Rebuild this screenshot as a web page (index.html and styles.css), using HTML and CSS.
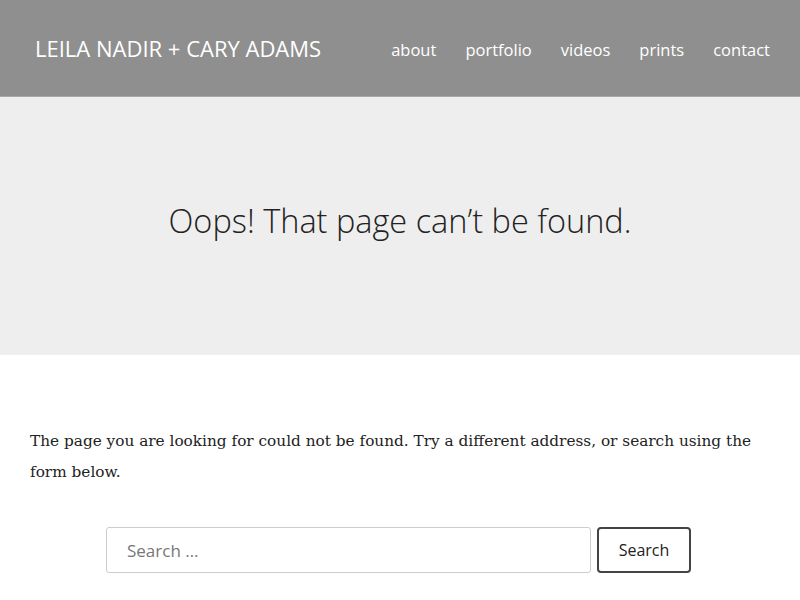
FILE: index.html
```html
<!DOCTYPE html>
<html>
<head>
<meta charset="utf-8">
<link rel="stylesheet" href="styles.css">
</head>
<body>
<header class="site-header">
  <div class="logo">LEILA NADIR + CARY ADAMS</div>
  <nav class="nav">
    <a href="#">about</a>
    <a href="#">portfolio</a>
    <a href="#">videos</a>
    <a href="#">prints</a>
    <a href="#">contact</a>
  </nav>
</header>
<section class="hero">
  <h1>Oops! That page can’t be found.</h1>
</section>
<main class="content">
  <p>The page you are looking for could not be found. Try a different address, or search using the form below.</p>
  <form class="search">
    <input type="search" placeholder="Search …">
    <button type="button">Search</button>
  </form>
</main>
</body>
</html>
```
FILE: styles.css
```css
html, body { margin: 0; padding: 0; background: #fff; }
body { font-family: "Open Sans", sans-serif; }
.site-header {
  height: 97px;
  background: #8f8f8f;
  border-bottom: 1px solid #a8a8a8;
  box-sizing: border-box;
  display: flex;
  align-items: center;
  justify-content: space-between;
  padding: 0 30px 0 35px;
}
.logo {
  color: #fff;
  font-family: "Open Sans", sans-serif;
  font-size: 22px;
  font-weight: 400;
  margin-top: -1px;
}
.nav { display: flex; gap: 29px; margin-top: 2px; }
.nav a {
  color: #fff;
  text-decoration: none;
  font-size: 16.5px;
  font-weight: 500;
}
.hero {
  background: #eeeeee;
  height: 258px;
  display: flex;
  align-items: center;
  justify-content: center;
}
.hero h1 {
  margin: 0;
  font-weight: 300;
  font-size: 32.5px;
  color: #222;
  margin-top: -12px;
}
.content { padding: 71px 30px 0 30px; }
.content p {
  margin: 0;
  font-family: "DejaVu Serif", serif;
  font-size: 15.3px;
  line-height: 31px;
  color: #222;
}
.search {
  display: flex;
  justify-content: center;
  gap: 6px;
  margin-top: 39px;
  padding-right: 3px;
}
.search input {
  width: 485px;
  height: 46px;
  box-sizing: border-box;
  border: 1px solid #ccc;
  border-radius: 3px;
  padding: 0 20px;
  font-family: "Open Sans", sans-serif;
  font-size: 17px;
  color: #333;
}
.search input::placeholder { color: #777; }
.search button {
  width: 94px;
  height: 46px;
  box-sizing: border-box;
  border: 2px solid #444;
  border-radius: 4px;
  background: #fff;
  font-family: "Open Sans", sans-serif;
  font-size: 16px;
  color: #222;
}
```
